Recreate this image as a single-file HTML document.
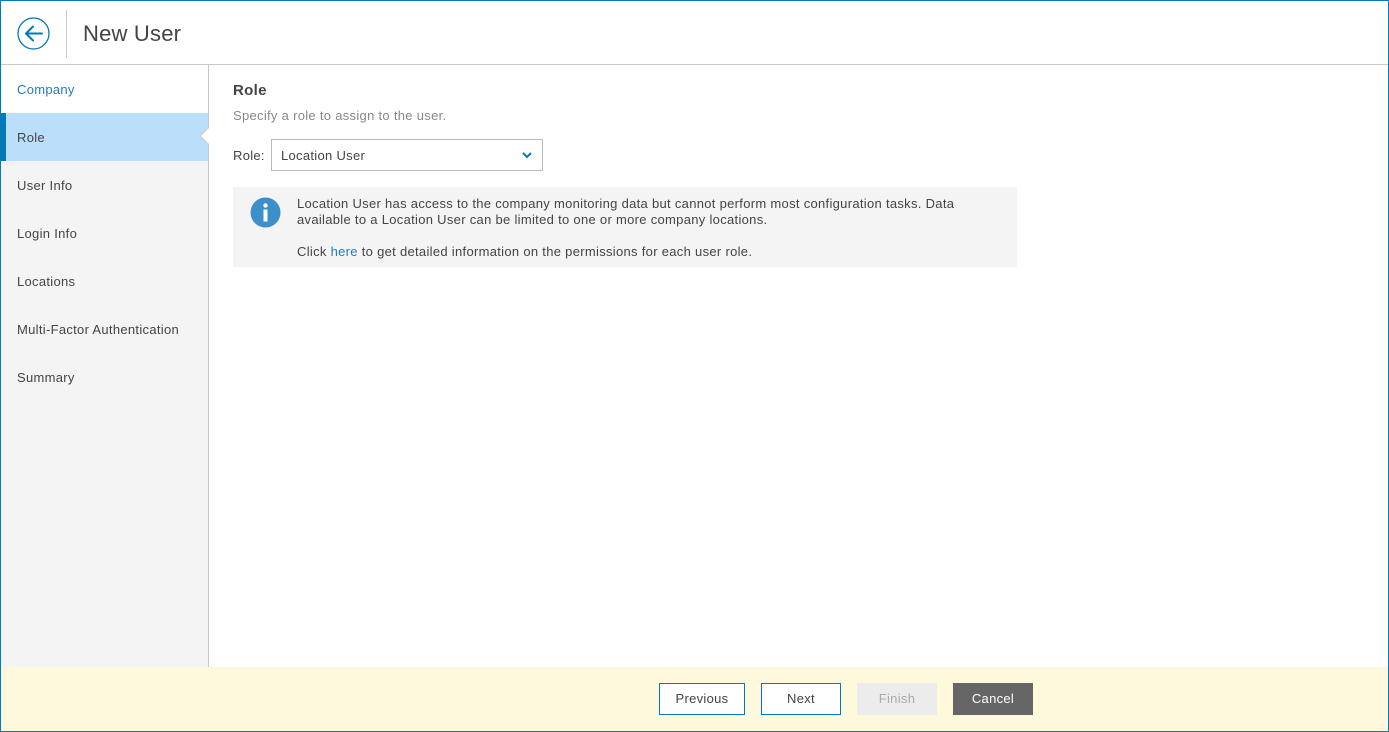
<!DOCTYPE html>
<html><head><style>
*{box-sizing:border-box;margin:0;padding:0}
body{width:1389px;height:732px;overflow:hidden;font-family:"Liberation Sans",sans-serif;background:#fff;color:#444;letter-spacing:0.3px}
.frame{position:absolute;left:0;top:0;width:1389px;height:732px;border:1px solid #007cbb}
.hdr{position:absolute;left:1px;top:1px;width:1387px;height:64px;border-bottom:1px solid #c8c8c8;background:#fff}
.back{position:absolute;left:16px;top:16px;width:33px;height:33px}
.vsep{position:absolute;left:65px;top:9px;width:1px;height:48px;background:#ccc}
.title{position:absolute;left:82px;top:20px;font-size:22px;color:#444;letter-spacing:0.2px}
.side{position:absolute;left:1px;top:65px;width:208px;height:602px;background:#f4f4f4;border-right:1px solid #c8c8c8}
.item{position:absolute;left:0;width:207px;height:48px;line-height:50px;padding-left:16px;font-size:13px;color:#444}
.item.first{background:#fff;color:#2a7ab8}
.item.sel{background:#bbdefb;border-left:5px solid #0079b8;padding-left:11px}
.notch{position:absolute;left:201px;top:65px;width:12px;height:12px;background:#fff;transform:rotate(45deg);border-left:1px solid #c8c8c8;border-bottom:1px solid #c8c8c8}
h2{position:absolute;left:233px;top:82px;font-size:15px;font-weight:bold;color:#444}
.sub{position:absolute;left:233px;top:108px;font-size:13px;color:#888;white-space:nowrap}
.lbl{position:absolute;left:233px;top:148px;font-size:13px}
.sel-box{position:absolute;left:271px;top:139px;width:272px;height:32px;border:1px solid #bbb;font-size:13px;line-height:31px;padding-left:9px;color:#444}
.sel-box svg{position:absolute;right:10px;top:12px}
.info{position:absolute;left:233px;top:187px;width:784px;height:80px;background:#f4f4f4;font-size:13px;line-height:16px;color:#444}
.info .ic{position:absolute;left:17px;top:10px}
.info p{position:absolute;left:64px;white-space:nowrap}
a{color:#1f7cc4;text-decoration:none}
.foot{position:absolute;left:1px;top:667px;width:1387px;height:64px;background:#fef9dc}
.btn{position:absolute;top:683px;height:32px;font-size:13px;text-align:center;line-height:32px}
.btn.b{border:1px solid #0079b8;background:#fff;line-height:30px}
</style></head><body>
<div class="frame"></div>
<div class="hdr">
<svg class="back" viewBox="0 0 33 33"><circle cx="16.5" cy="16.5" r="15.5" fill="none" stroke="#0079b8" stroke-width="1.3"/><path d="M9 16.5H25M16 9.5L9 16.5L16 23.5" fill="none" stroke="#0079b8" stroke-width="2" stroke-linecap="round" stroke-linejoin="round"/></svg>
<div class="vsep"></div>
<div class="title">New User</div>
</div>
<div class="side">
<div class="item first" style="top:0">Company</div>
<div class="item sel" style="top:48px">Role</div>
<div class="item" style="top:96px">User Info</div>
<div class="item" style="top:144px">Login Info</div>
<div class="item" style="top:192px">Locations</div>
<div class="item" style="top:240px">Multi-Factor Authentication</div>
<div class="item" style="top:288px">Summary</div>
<div class="notch"></div>
</div>
<h2>Role</h2>
<div class="sub">Specify a role to assign to the user.</div>
<div class="lbl">Role:</div>
<div class="sel-box">Location User<svg width="10" height="7" viewBox="0 0 10 7"><path d="M1 1L5 5L9 1" fill="none" stroke="#0079b8" stroke-width="2"/></svg></div>
<div class="info">
<svg class="ic" width="31" height="31" viewBox="0 0 31 31"><circle cx="15.5" cy="15.5" r="15" fill="#3d8fcb"/><circle cx="15.5" cy="8.5" r="2.2" fill="#fff"/><rect x="13.5" y="12.5" width="4" height="12" fill="#fff"/></svg>
<p style="top:9px">Location User has access to the company monitoring data but cannot perform most configuration tasks. Data<br>available to a Location User can be limited to one or more company locations.</p>
<p style="top:57px">Click <a>here</a> to get detailed information on the permissions for each user role.</p>
</div>
<div class="foot"></div>
<div class="btn b" style="left:659px;width:86px">Previous</div>
<div class="btn b" style="left:761px;width:80px">Next</div>
<div class="btn" style="left:857px;width:80px;background:#ececec;color:#aaa">Finish</div>
<div class="btn" style="left:953px;width:80px;background:#666;color:#fff">Cancel</div>
</body></html>
